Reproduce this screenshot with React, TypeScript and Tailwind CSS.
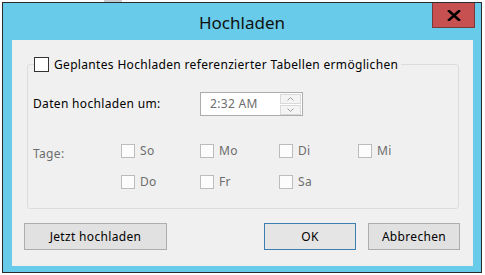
import React from "react";

const font = { fontFamily: '"Noto Sans", "Open Sans", sans-serif' };

function DayBox({ label }: { label: string }) {
  return (
    <div className="flex items-center gap-[5px] w-[79px]">
      <div className="w-[14px] h-[14px] border border-[#bcbcbc] bg-[#fcfcfc]" />
      <span className="text-[12px] tracking-[0.33px] text-[#6d6d6d] leading-none">{label}</span>
    </div>
  );
}

export default function App() {
  return (
    <div className="w-[485px] h-[275px] bg-white relative overflow-hidden" style={font}>
      <div className="absolute left-[104px] top-0 w-[18px] h-[2px] bg-[#c8ccd0]" />
      <div className="pt-[2px] pl-[2px]">
        <div className="w-[480px] h-[271px] border border-[#2b2b2b] bg-[#67cbe9] flex flex-col">
          {/* title bar */}
          <div className="h-[37px] relative flex items-center justify-center">
            <span className="text-[17px] text-[#111] mt-[3px]">Hochladen</span>
            <div className="absolute right-[6px] top-0 w-[43px] h-[25px] bg-[#c75050] border border-[#7a3a3a] border-t-0 flex items-center justify-center">
              <svg width="14" height="11" viewBox="0 0 14 11">
                <path d="M2 1 L12 10 M12 1 L2 10" stroke="#000" strokeWidth="2.6" strokeLinecap="square" />
              </svg>
            </div>
          </div>
          {/* client */}
          <div className="ml-[9px] w-[461px] h-[226px] bg-[#f0f0f0] flex flex-col">
            {/* group box */}
            <div className="relative mt-[24px] ml-[15px] w-[432px] h-[145px] border border-[#dcdcdc] rounded-[3px]">
              <div className="absolute left-[6px] top-[-8px] flex items-center gap-[5px] bg-[#f0f0f0] pr-[3px]">
                <div className="w-[15px] h-[15px] border border-[#333] bg-white" />
                <span className="text-[12px] tracking-[0.33px] text-black leading-none">
                  Geplantes Hochladen referenzierter Tabellen ermöglichen
                </span>
              </div>
              <div className="flex flex-col pl-[5px] pt-[27px]">
                <div className="flex items-center">
                  <span className="w-[167px] text-[12px] tracking-[0.33px] text-black">Daten hochladen um:</span>
                  <div className="w-[103px] h-[24px] border border-[#acacac] bg-white flex items-center">
                    <span className="flex-1 pl-[9px] text-[12px] tracking-[0.33px] text-[#6d6d6d]">2:32 AM</span>
                    <div className="flex flex-col gap-[1px] mr-[1px]">
                      <div className="w-[21px] h-[10px] border border-[#d9d9d9] bg-[#f4f4f4] flex items-center justify-center">
                        <svg width="7" height="4" viewBox="0 0 7 4">
                          <path d="M0.5 3.5 L3.5 0.5 L6.5 3.5" stroke="#a0a0a0" fill="none" />
                        </svg>
                      </div>
                      <div className="w-[21px] h-[10px] border border-[#d9d9d9] bg-[#f4f4f4] flex items-center justify-center">
                        <svg width="7" height="4" viewBox="0 0 7 4">
                          <path d="M0.5 0.5 L3.5 3.5 L6.5 0.5" stroke="#a0a0a0" fill="none" />
                        </svg>
                      </div>
                    </div>
                  </div>
                </div>
                <div className="flex mt-[28px]">
                  <span className="w-[88px] text-[12px] tracking-[0.33px] text-[#6d6d6d] pt-[1px]">Tage:</span>
                  <div className="flex flex-col gap-[17px]">
                    <div className="flex">
                      <DayBox label="So" />
                      <DayBox label="Mo" />
                      <DayBox label="Di" />
                      <DayBox label="Mi" />
                    </div>
                    <div className="flex">
                      <DayBox label="Do" />
                      <DayBox label="Fr" />
                      <DayBox label="Sa" />
                    </div>
                  </div>
                </div>
              </div>
            </div>
            {/* buttons */}
            <div className="flex mt-[14px] ml-[12px]">
              <button className="w-[143px] h-[27px] border border-[#adadad] bg-[#e1e1e1] text-[12px] tracking-[0.33px] text-black">
                Jetzt hochladen
              </button>
              <button className="ml-[97px] w-[92px] h-[27px] border border-[#3c7fb1] bg-[#e5e5e5] text-[12px] tracking-[0.33px] text-black">
                OK
              </button>
              <button className="ml-[12px] w-[92px] h-[27px] border border-[#adadad] bg-[#e1e1e1] text-[12px] tracking-[0.33px] text-black">
                Abbrechen
              </button>
            </div>
          </div>
        </div>
      </div>
    </div>
  );
}
